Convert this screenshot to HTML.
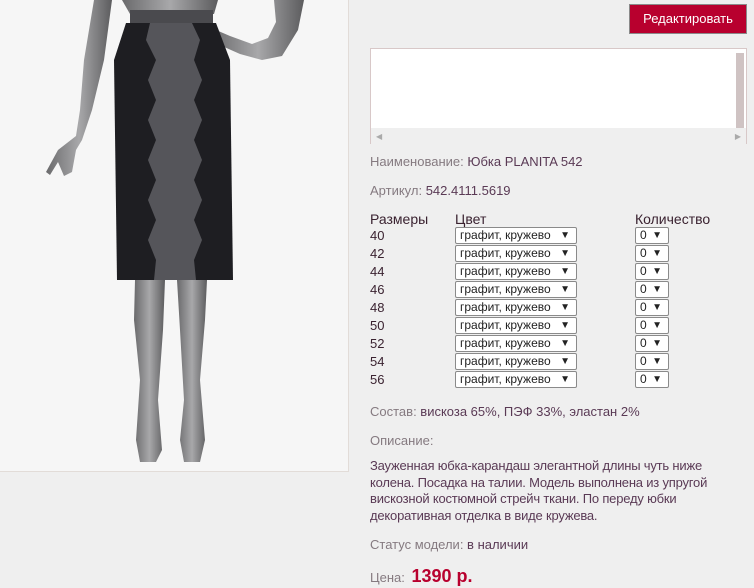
<!DOCTYPE html>
<html><head><meta charset="utf-8"><style>
*{margin:0;padding:0;box-sizing:border-box}
body{width:754px;height:588px;background:#efefef;font-family:"Liberation Sans",sans-serif;position:relative;overflow:hidden}
.a{position:absolute}
.lbl{color:#857a80;font-size:13px}
.val{color:#5a3a55}
.sel{position:absolute;height:17px;background:#fff;border:1px solid #8a8a8a;border-radius:2px;font-size:12px;color:#222;padding-left:4px;line-height:15px}
.sel span{position:absolute;right:6px;top:0;font-size:10px}
.sz{position:absolute;left:370px;font-size:13px;color:#3a2230}
</style></head><body>
<div class="a" style="left:0;top:0;width:349px;height:472px;background:#f6f6f6;border-right:1px solid #e2dcd8;border-bottom:1px solid #e2dcd8">
<svg width="348" height="471" viewBox="0 0 348 471">
<defs><linearGradient id="g" x1="0" x2="1"><stop offset="0" stop-color="#6a6a6c"/><stop offset=".5" stop-color="#a8a8aa"/><stop offset="1" stop-color="#5c5c5e"/></linearGradient></defs>
<path d="M122 0 L218 0 L214 14 L130 14 Z" fill="url(#g)"/>
<path d="M94 0 L112 0 L104 60 L92 110 L82 140 L76 150 L72 172 L64 176 L58 162 L50 175 L46 172 L58 150 L76 136 L80 110 L84 60 Z" fill="url(#g)"/>
<path d="M274 0 L304 0 L298 30 L282 56 L262 60 L240 54 L222 46 L212 38 L216 30 L230 36 L252 44 L268 38 L276 22 Z" fill="url(#g)"/>
<path d="M135 280 L165 280 L163 330 L158 400 L162 450 L156 462 L140 462 L136 440 L140 380 L134 320 Z" fill="url(#g)"/>
<path d="M177 280 L207 280 L205 320 L200 380 L205 440 L200 462 L184 462 L180 440 L184 400 L180 330 Z" fill="url(#g)"/>
<path d="M130 10 L213 10 L213 23 L130 23 Z" fill="#4a4a4e"/>
<path d="M126 23 L216 23 L230 60 L233 280 L117 280 L114 60 Z" fill="#1e1e22"/>
<path d="M150 23 L192 23 L200 40 L194 60 L202 80 L194 100 L202 120 L194 140 L202 160 L194 180 L202 200 L194 220 L202 240 L194 260 L196 280 L154 280 L156 260 L148 240 L156 220 L148 200 L156 180 L148 160 L156 140 L148 120 L156 100 L148 80 L156 60 L146 40 Z" fill="#55555a"/>
</svg>
</div>
<div class="a" style="left:629px;top:4px;width:118px;height:30px;background:#b8002e;border:1px solid #8a8a8a;color:#fff;font-size:13px;text-align:center;line-height:28px">Редактировать</div>
<div class="a" style="left:370px;top:48px;width:377px;height:96px;background:#fff;border:1px solid #d8c8c8;border-bottom:none">
<div class="a" style="right:2px;top:4px;width:8px;height:75px;background:#cfc3c3"></div>
<div class="a" style="left:0;top:79px;width:375px;height:17px;background:#efefef;color:#aaa;font-size:8px;line-height:17px;padding:0 5px">◀<span style="float:right">▶</span></div>
</div>
<div class="a lbl" style="left:370px;top:154px">Наименование: <span class="val">Юбка PLANITA 542</span></div>
<div class="a lbl" style="left:370px;top:183px">Артикул: <span class="val">542.4111.5619</span></div>
<div class="a" style="left:370px;top:211px;font-size:14px;color:#3a2230">Размеры</div>
<div class="a" style="left:455px;top:211px;font-size:14px;color:#3a2230">Цвет</div>
<div class="a" style="left:635px;top:211px;font-size:14px;color:#3a2230">Количество</div>
<div class="sz" style="top:228px">40</div><div class="sel" style="left:455px;top:227px;width:122px">графит, кружево<span>▼</span></div><div class="sel" style="left:635px;top:227px;width:34px">0<span>▼</span></div>
<div class="sz" style="top:246px">42</div><div class="sel" style="left:455px;top:245px;width:122px">графит, кружево<span>▼</span></div><div class="sel" style="left:635px;top:245px;width:34px">0<span>▼</span></div>
<div class="sz" style="top:264px">44</div><div class="sel" style="left:455px;top:263px;width:122px">графит, кружево<span>▼</span></div><div class="sel" style="left:635px;top:263px;width:34px">0<span>▼</span></div>
<div class="sz" style="top:282px">46</div><div class="sel" style="left:455px;top:281px;width:122px">графит, кружево<span>▼</span></div><div class="sel" style="left:635px;top:281px;width:34px">0<span>▼</span></div>
<div class="sz" style="top:300px">48</div><div class="sel" style="left:455px;top:299px;width:122px">графит, кружево<span>▼</span></div><div class="sel" style="left:635px;top:299px;width:34px">0<span>▼</span></div>
<div class="sz" style="top:318px">50</div><div class="sel" style="left:455px;top:317px;width:122px">графит, кружево<span>▼</span></div><div class="sel" style="left:635px;top:317px;width:34px">0<span>▼</span></div>
<div class="sz" style="top:336px">52</div><div class="sel" style="left:455px;top:335px;width:122px">графит, кружево<span>▼</span></div><div class="sel" style="left:635px;top:335px;width:34px">0<span>▼</span></div>
<div class="sz" style="top:354px">54</div><div class="sel" style="left:455px;top:353px;width:122px">графит, кружево<span>▼</span></div><div class="sel" style="left:635px;top:353px;width:34px">0<span>▼</span></div>
<div class="sz" style="top:372px">56</div><div class="sel" style="left:455px;top:371px;width:122px">графит, кружево<span>▼</span></div><div class="sel" style="left:635px;top:371px;width:34px">0<span>▼</span></div>
<div class="a lbl" style="left:370px;top:404px">Состав: <span class="val">вискоза 65%, ПЭФ 33%, эластан 2%</span></div>
<div class="a lbl" style="left:370px;top:433px">Описание:</div>
<div class="a val" style="left:370px;top:458px;width:345px;font-size:13px;line-height:16.5px;letter-spacing:-0.2px">Зауженная юбка-карандаш элегантной длины чуть ниже колена. Посадка на талии. Модель выполнена из упругой вискозной костюмной стрейч ткани. По переду юбки декоративная отделка в виде кружева.</div>
<div class="a lbl" style="left:370px;top:537px">Статус модели: <span class="val">в наличии</span></div>
<div class="a lbl" style="left:370px;top:566px">Цена: <span style="color:#b8002e;font-size:18px;font-weight:bold;margin-left:3px">1390 р.</span></div>
</body></html>
